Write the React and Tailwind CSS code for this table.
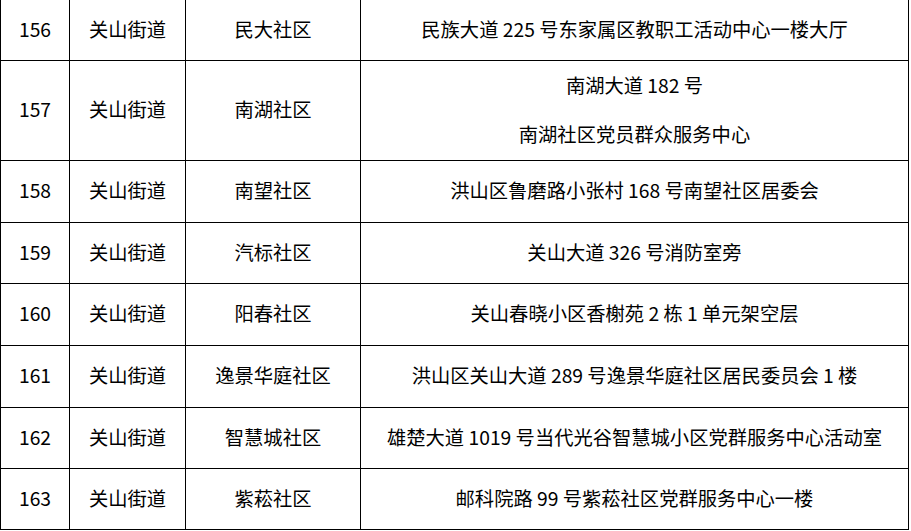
import React from 'react'

const rows = [
  { no: '156', street: '关山街道', name: '民大社区', addr: ['民族大道 225 号东家属区教职工活动中心一楼大厅'], h: 'h-[61px]' },
  { no: '157', street: '关山街道', name: '南湖社区', addr: ['南湖大道 182 号', '南湖社区党员群众服务中心'], h: 'h-[100px]' },
  { no: '158', street: '关山街道', name: '南望社区', addr: ['洪山区鲁磨路小张村 168 号南望社区居委会'], h: 'h-[62px]' },
  { no: '159', street: '关山街道', name: '汽标社区', addr: ['关山大道 326 号消防室旁'], h: 'h-[61px]' },
  { no: '160', street: '关山街道', name: '阳春社区', addr: ['关山春晓小区香榭苑 2 栋 1 单元架空层'], h: 'h-[62px]' },
  { no: '161', street: '关山街道', name: '逸景华庭社区', addr: ['洪山区关山大道 289 号逸景华庭社区居民委员会 1 楼'], h: 'h-[62px]' },
  { no: '162', street: '关山街道', name: '智慧城社区', addr: ['雄楚大道 1019 号当代光谷智慧城小区党群服务中心活动室'], h: 'h-[61px]' },
  { no: '163', street: '关山街道', name: '紫菘社区', addr: ['邮科院路 99 号紫菘社区党群服务中心一楼'], h: 'h-[61px]' },
]

function Cell({ children, className }) {
  return (
    <div className={'flex flex-col items-center justify-center pb-[2px] border-r border-b border-black text-center ' + className}>
      {children}
    </div>
  )
}

export default function App() {
  return (
    <div className="w-[911px] h-[531px] bg-white overflow-hidden text-black text-[19.3px] font-['Noto_Sans_CJK_SC',sans-serif]">
      <div className="w-[909px] border-l border-black grid grid-cols-[69px_116px_175px_548px]">
        {rows.map((r) => (
          <React.Fragment key={r.no}>
            <Cell className={r.h}>{r.no}</Cell>
            <Cell className={r.h}>{r.street}</Cell>
            <Cell className={r.h}>{r.name}</Cell>
            <Cell className={r.h + ' leading-[49px]'}>
              {r.addr.map((line) => (
                <div key={line}>{line}</div>
              ))}
            </Cell>
          </React.Fragment>
        ))}
      </div>
    </div>
  )
}
